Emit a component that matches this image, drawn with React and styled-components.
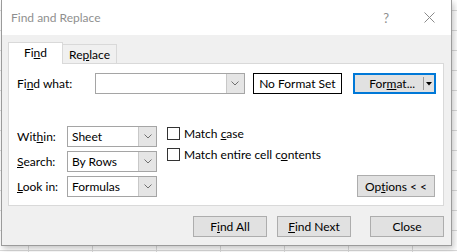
import React from 'react';
import styled, { createGlobalStyle } from 'styled-components';

const GlobalStyle = createGlobalStyle`
  html, body {
    margin: 0;
    padding: 0;
  }
  body {
    width: 457px;
    height: 252px;
    overflow: hidden;
    background-color: #fff;
    background-image: linear-gradient(to right, #dadada 1px, transparent 1px),
      linear-gradient(to bottom, #dadada 1px, transparent 1px);
    background-size: 64px 20px;
    background-position: 28px 10px;
    font-family: Lato, "Noto Sans", sans-serif;
    font-size: 12px;
    color: #000;
  }
`;

const Page = styled.div`
  padding-left: 1px;
`;

const Dialog = styled.div`
  width: 451px;
  height: 246px;
  box-sizing: border-box;
  border: 1px solid #9b9b9b;
  border-top: none;
  background: #f0f0f0;
  box-shadow: 2px 3px 6px rgba(0, 0, 0, 0.22);
  display: flex;
  flex-direction: column;
`;

const TitleBar = styled.div`
  height: 35px;
  flex: none;
  background: #fff;
  display: flex;
  align-items: center;
  padding-left: 9px;
  padding-right: 16px;
`;

const Title = styled.div`
  color: #8f8f8f;
  font-size: 12px;
  flex: 1;
`;

const Help = styled.div`
  color: #8f8f8f;
  font-size: 13px;
  margin-right: 35px;
`;

const Body = styled.div`
  flex: 1;
  padding: 7px 7px 0 6px;
  display: flex;
  flex-direction: column;
`;

const Tabs = styled.div`
  display: flex;
  align-items: flex-end;
  height: 21px;
`;

const Tab = styled.div`
  box-sizing: border-box;
  width: ${p => (p.active ? 55 : 54)}px;
  height: ${p => (p.active ? 22 : 19)}px;
  margin-bottom: ${p => (p.active ? -1 : 0)}px;
  border: 1px solid #d9d9d9;
  border-bottom: none;
  border-left: ${p => (p.active ? '1px solid #d9d9d9' : 'none')};
  background: ${p => (p.active ? '#fff' : '#f0f0f0')};
  position: relative;
  z-index: ${p => (p.active ? 1 : 0)};
  display: flex;
  align-items: center;
  justify-content: center;
  padding-bottom: ${p => (p.active ? 2 : 0)}px;
`;

const Panel = styled.div`
  box-sizing: border-box;
  height: 143px;
  background: #fff;
  border: 1px solid #d9d9d9;
  padding: 9px 7px 0 8px;
  display: flex;
  flex-direction: column;
`;

const Row = styled.div`
  display: flex;
  align-items: center;
  height: 21px;
`;

const Label = styled.div`
  width: ${p => p.width}px;
  flex: none;
`;

const Combo = styled.div`
  box-sizing: border-box;
  width: ${p => p.width}px;
  height: 21px;
  border: 1px solid #a5a5a5;
  display: flex;
  background: #fff;
`;

const ComboText = styled.div`
  flex: 1;
  padding-left: 4px;
  display: flex;
  align-items: center;
`;

const ComboButton = styled.div`
  width: 17px;
  background: #e5e5e5;
  border-left: 1px solid #c8c8c8;
  display: flex;
  align-items: center;
  justify-content: center;
`;

const FormatBox = styled.div`
  box-sizing: border-box;
  width: 90px;
  height: 21px;
  margin-left: 8px;
  border: 1px solid #000;
  display: flex;
  align-items: center;
  justify-content: center;
`;

const SplitButton = styled.div`
  box-sizing: border-box;
  width: 83px;
  height: 21px;
  margin-left: 11px;
  border: 2px solid #0078d7;
  background: #e1e1e1;
  display: flex;
`;

const SplitMain = styled.div`
  flex: 1;
  display: flex;
  align-items: center;
  justify-content: center;
  padding-left: 6px;
`;

const SplitArrow = styled.div`
  width: 10px;
  margin: 2px 0;
  border-left: 1px solid #9a9a9a;
  display: flex;
  align-items: center;
  justify-content: center;
`;

const Options = styled.div`
  margin-top: 32px;
  display: flex;
  align-items: flex-start;
`;

const Fields = styled.div`
  display: flex;
  flex-direction: column;
  gap: 4px;
`;

const Checks = styled.div`
  margin-left: 10px;
  display: flex;
  flex-direction: column;
  gap: 7px;
`;

const CheckRow = styled.label`
  display: flex;
  align-items: center;
  gap: 4px;
  height: 13px;
  margin-top: 1px;
`;

const Box = styled.span`
  box-sizing: border-box;
  width: 13px;
  height: 13px;
  border: 1px solid #333;
  background: #fff;
`;

const Button = styled.div`
  box-sizing: border-box;
  width: ${p => p.width || 74}px;
  height: 21px;
  background: #e1e1e1;
  border: 1px solid #adadad;
  display: flex;
  align-items: center;
  justify-content: center;
`;

const OptionsButton = styled(Button)`
  margin-left: auto;
  margin-top: 49px;
  margin-right: 1px;
  height: 22px;
`;

const Footer = styled.div`
  display: flex;
  justify-content: flex-end;
  margin-top: 10px;
`;

const FooterButton = styled(Button)`
  margin-left: ${p => p.gap}px;
`;

const Chevron = () => (
  <svg width="8" height="5" viewBox="0 0 8 5">
    <polyline points="0.5,0.5 4,4 7.5,0.5" fill="none" stroke="#707070" strokeWidth="1" />
  </svg>
);

const CloseIcon = () => (
  <svg width="11" height="11" viewBox="0 0 11 11">
    <path d="M0.5 0.5 L10.5 10.5 M10.5 0.5 L0.5 10.5" stroke="#8a8a8a" strokeWidth="1" />
  </svg>
);

const DownArrow = () => (
  <svg width="6" height="4" viewBox="0 0 6 4">
    <polygon points="0,0 6,0 3,3.5" fill="#000" />
  </svg>
);

const Select = ({ width, value }) => (
  <Combo width={width}>
    <ComboText>{value}</ComboText>
    <ComboButton>
      <Chevron />
    </ComboButton>
  </Combo>
);

const App = () => {
  return (
    <Page>
      <GlobalStyle />
      <Dialog>
        <TitleBar>
          <Title>Find and Replace</Title>
          <Help>?</Help>
          <CloseIcon />
        </TitleBar>
        <Body>
          <Tabs>
            <Tab active>
              Fi<u>n</u>d
            </Tab>
            <Tab>
              Re<u>p</u>lace
            </Tab>
          </Tabs>
          <Panel>
            <Row>
              <Label width={78}>
                Fi<u>n</u>d what:
              </Label>
              <Select width={150} value="" />
              <FormatBox>No Format Set</FormatBox>
              <SplitButton>
                <SplitMain>
                  For<u>m</u>at...
                </SplitMain>
                <SplitArrow>
                  <DownArrow />
                </SplitArrow>
              </SplitButton>
            </Row>
            <Options>
              <Fields>
                <Row>
                  <Label width={50}>
                    Wit<u>h</u>in:
                  </Label>
                  <Select width={90} value="Sheet" />
                </Row>
                <Row>
                  <Label width={50}>
                    <u>S</u>earch:
                  </Label>
                  <Select width={90} value="By Rows" />
                </Row>
                <Row>
                  <Label width={50}>
                    <u>L</u>ook in:
                  </Label>
                  <Select width={90} value="Formulas" />
                </Row>
              </Fields>
              <Checks>
                <CheckRow>
                  <Box />
                  <span>
                    Match <u>c</u>ase
                  </span>
                </CheckRow>
                <CheckRow>
                  <Box />
                  <span>
                    Match entire cell c<u>o</u>ntents
                  </span>
                </CheckRow>
              </Checks>
              <OptionsButton width={78}>
                Op<u>t</u>ions &lt; &lt;
              </OptionsButton>
            </Options>
          </Panel>
          <Footer>
            <FooterButton gap={0}>
              F<u>i</u>nd All
            </FooterButton>
            <FooterButton gap={10}>
              <u>F</u>ind Next
            </FooterButton>
            <FooterButton gap={19}>Close</FooterButton>
          </Footer>
        </Body>
      </Dialog>
    </Page>
  );
};

export default App;
